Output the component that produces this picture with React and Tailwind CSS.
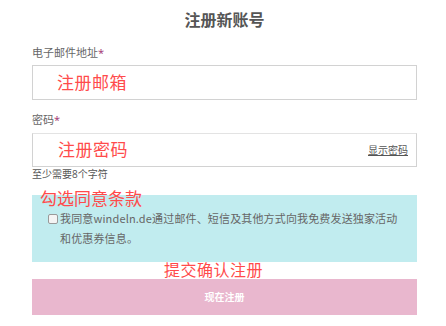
import React from 'react';

const App = () => {
  return (
    <div className="w-[446px] h-[326px] bg-white font-['Open_Sans','Noto_Sans_CJK_SC',sans-serif] text-[#666]">
      <div className="pl-[32px] pr-[29px] pt-[9px] w-[446px]">
        {/* Title */}
        <h1 className="text-center text-[16px] leading-[22px] font-bold text-[#555]">注册新账号</h1>

        {/* Email */}
        <label className="block mt-[15px] text-[11px] leading-[14px]">
          电子邮件地址<span className="text-[#a0306e]">*</span>
        </label>
        <div className="mt-[5px] h-[35px] border border-[#d2d2d2] flex items-center pl-[24px]">
          <span className="text-[17px] text-[#ff4b4b] tracking-[0.5px]">注册邮箱</span>
        </div>

        {/* Password */}
        <label className="block mt-[13px] text-[11px] leading-[14px]">
          密码<span className="text-[#a0306e]">*</span>
        </label>
        <div className="mt-[6px] h-[34px] border border-[#d2d2d2] border-t-[#e3e3e3] flex items-center justify-between pl-[25px] pr-[8px]">
          <span className="text-[17px] text-[#ff4b4b] tracking-[0.5px]">注册密码</span>
          <span className="text-[10px] text-[#555] underline">显示密码</span>
        </div>
        <p className="mt-[1px] text-[10px] leading-[13px] text-[#555]">至少需要8个字符</p>

        {/* Consent */}
        <div className="relative mt-[14px] h-[67px] bg-[#c1ecef] pt-[13px] pl-[16px]">
          <span className="absolute left-[8px] top-[-6px] text-[17px] leading-[20px] text-[#ff4b4b]">勾选同意条款</span>
          <div className="flex items-start">
            <span className="mt-[6px] w-[10px] h-[10px] shrink-0 rounded-[2px] border border-[#999] bg-[#f4f4f4]" />
            <p className="ml-[2px] w-[343px] font-['Noto_Sans_CJK_SC',sans-serif] text-[11px] leading-[20px] tracking-[0.15px] text-[#666]">
              我同意windeln.de通过邮件、短信及其他方式向我免费发送独家活动和优惠券信息。
            </p>
          </div>
        </div>

        {/* Submit */}
        <div className="relative">
          <span className="absolute left-[132px] top-[-2px] text-[16px] leading-[20px] text-[#ff4b4b] tracking-[0.5px]">提交确认注册</span>
        </div>
        <button className="mt-[17px] w-full h-[36px] bg-[#e9b7ce] text-white text-[10px] font-bold">
          现在注册
        </button>
      </div>
    </div>
  );
};

export default App;
